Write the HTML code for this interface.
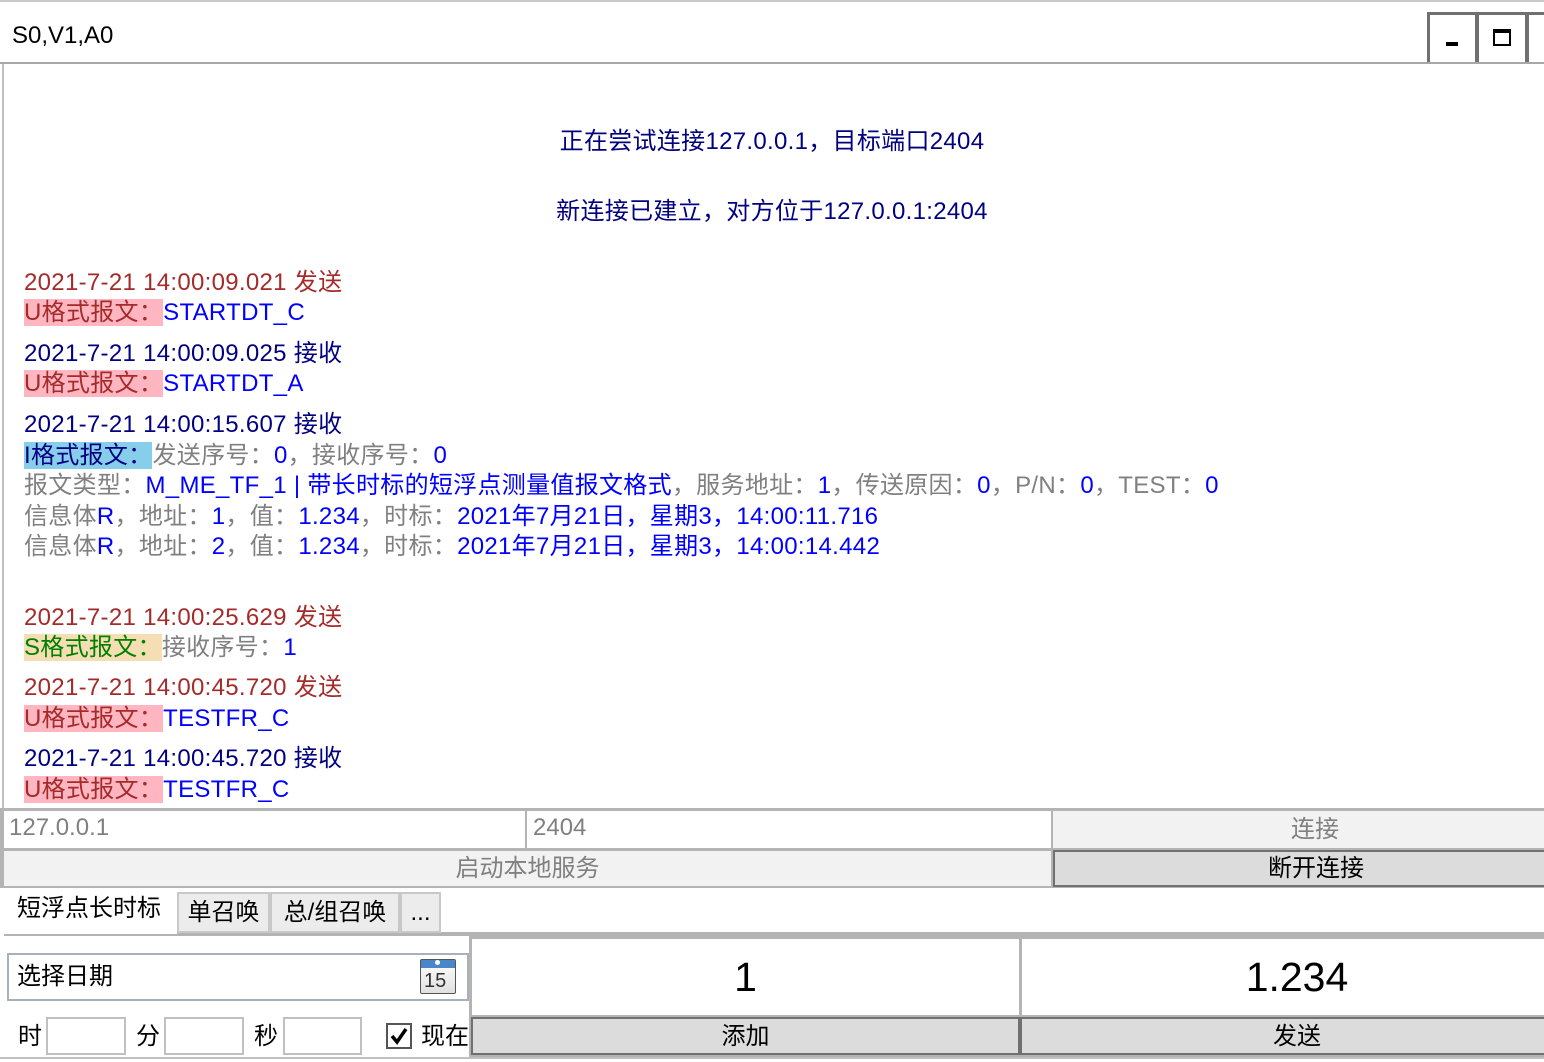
<!DOCTYPE html>
<html><head><meta charset="utf-8"><style>
*{margin:0;padding:0;box-sizing:border-box}
body{width:1544px;height:1062px;background:#fff;position:relative;overflow:hidden;font-family:"Liberation Sans","Noto Sans CJK SC",sans-serif;font-size:24px}
.a{position:absolute}
.l{position:absolute;left:24px;height:30px;line-height:30px;white-space:nowrap;letter-spacing:0.3px}
.r{color:#a52a2a}.n{color:#000080}.b{color:#0000ff}.g{color:#808080}.gr{color:#008000}
.pk{background:#ffb6c1}.sk{background:#87ceeb}.wh{background:#f5deb3}
.c{text-align:center}
</style></head><body>
<!-- title -->
<div class="a" style="left:0;top:0;width:1544px;height:2px;background:#c8c8c8"></div>
<div class="a" style="left:12px;top:22px;font-size:24px;color:#000">S0,V1,A0</div>
<div class="a" style="left:0;top:62px;width:1544px;height:2px;background:#a8a8a8"></div>
<div class="a" style="left:1427px;top:12px;width:51px;height:50px;border:3px solid #707070;border-bottom:none;background:#fff"></div>
<div class="a" style="left:1476px;top:12px;width:52px;height:50px;border:3px solid #707070;border-bottom:none;background:#fff"></div>
<div class="a" style="left:1526px;top:12px;width:20px;height:50px;border-left:3px solid #707070;border-top:3px solid #707070"></div>
<div class="a" style="left:1446px;top:42px;width:12px;height:4px;background:#000"></div>
<div class="a" style="left:1493px;top:29px;width:18px;height:17px;border:2px solid #000;border-top-width:4px"></div>
<div class="a" style="left:2px;top:64px;width:2px;height:746px;background:#c0c0c0"></div>
<!-- log -->
<div class="l n c" style="left:0;width:1544px;top:127px">正在尝试连接127.0.0.1，目标端口2404</div>
<div class="l n c" style="left:0;width:1544px;top:197px">新连接已建立，对方位于127.0.0.1:2404</div>
<div class="l r" style="top:268px">2021-7-21 14:00:09.021 发送</div>
<div class="l" style="top:298px"><span class="pk r">U格式报文：</span><span class="b">STARTDT_C</span></div>
<div class="l n" style="top:339px">2021-7-21 14:00:09.025 接收</div>
<div class="l" style="top:369px"><span class="pk r">U格式报文：</span><span class="b">STARTDT_A</span></div>
<div class="l n" style="top:410px">2021-7-21 14:00:15.607 接收</div>
<div class="l" style="top:441px"><span class="sk n">I格式报文：</span><span class="g">发送序号：</span><span class="b">0</span><span class="g">，接收序号：</span><span class="b">0</span></div>
<div class="l" style="top:471px"><span class="g">报文类型：</span><span class="b">M_ME_TF_1 | 带长时标的短浮点测量值报文格式</span><span class="g">，服务地址：</span><span class="b">1</span><span class="g">，传送原因：</span><span class="b">0</span><span class="g">，P/N：</span><span class="b">0</span><span class="g">，TEST：</span><span class="b">0</span></div>
<div class="l" style="top:502px"><span class="g">信息体</span><span class="b">R</span><span class="g">，地址：</span><span class="b">1</span><span class="g">，值：</span><span class="b">1.234</span><span class="g">，时标：</span><span class="b">2021年7月21日，星期3，14:00:11.716</span></div>
<div class="l" style="top:532px"><span class="g">信息体</span><span class="b">R</span><span class="g">，地址：</span><span class="b">2</span><span class="g">，值：</span><span class="b">1.234</span><span class="g">，时标：</span><span class="b">2021年7月21日，星期3，14:00:14.442</span></div>
<div class="l r" style="top:603px">2021-7-21 14:00:25.629 发送</div>
<div class="l" style="top:633px"><span class="wh gr">S格式报文：</span><span class="g">接收序号：</span><span class="b">1</span></div>
<div class="l r" style="top:673px">2021-7-21 14:00:45.720 发送</div>
<div class="l" style="top:704px"><span class="pk r">U格式报文：</span><span class="b">TESTFR_C</span></div>
<div class="l n" style="top:744px">2021-7-21 14:00:45.720 接收</div>
<div class="l" style="top:775px"><span class="pk r">U格式报文：</span><span class="b">TESTFR_C</span></div>
<!-- row1 -->
<div class="a" style="left:0;top:808px;width:1544px;height:80px;background:#b4b4b4"></div>
<div class="a g" style="left:4px;top:811px;width:521px;height:37px;background:#fff;padding-left:5px;line-height:34px">127.0.0.1</div>
<div class="a g" style="left:527px;top:811px;width:524px;height:37px;background:#fff;padding-left:6px;line-height:34px">2404</div>
<div class="a g c" style="left:1053px;top:811px;width:524px;height:37px;background:#f2f2f2;line-height:38px">连接</div>
<div class="a g c" style="left:4px;top:851px;width:1047px;height:35px;background:#f2f2f2;line-height:36px">启动本地服务</div>
<div class="a c" style="left:1053px;top:850px;width:524px;height:37px;background:#dcdcdc;border-top:2px solid #707070;border-left:2px solid #707070;border-bottom:2px solid #707070;line-height:34px">断开连接</div>
<!-- tabs -->
<div class="a" style="left:0;top:888px;width:1544px;height:174px;background:#fff"></div>
<div class="a" style="left:176px;top:932px;width:1368px;height:2px;background:#b4b4b4"></div>
<div class="a" style="left:4px;top:934px;width:1540px;height:2px;background:#b4b4b4"></div>
<div class="a" style="left:4px;top:888px;width:173px;height:46px;background:#fff;line-height:42px;padding-left:13px">短浮点长时标</div>
<div class="a c" style="left:177px;top:892px;width:93px;height:41px;background:#ececec;border:2px solid #c8c8c8;line-height:38px">单召唤</div>
<div class="a c" style="left:270px;top:892px;width:130px;height:41px;background:#ececec;border:2px solid #c8c8c8;line-height:38px">总/组召唤</div>
<div class="a c" style="left:400px;top:892px;width:41px;height:41px;background:#ececec;border:2px solid #c8c8c8;line-height:38px">...</div>
<!-- date picker -->
<div class="a" style="left:7px;top:953px;width:462px;height:48px;border:2px solid #a7b0bb;line-height:44px;padding-left:8px">选择日期</div>
<div class="a" style="left:420px;top:959px;width:36px;height:35px;border:1px solid #555;border-radius:2px;background:linear-gradient(#fff,#e0e0e0)"></div>
<div class="a" style="left:421px;top:960px;width:34px;height:8px;background:#4a86c8"></div>
<div class="a" style="left:435px;top:960px;width:5px;height:5px;border-radius:50%;background:#fff"></div>
<div class="a" style="left:424px;top:968px;font-size:20px;line-height:26px;color:#333">15</div>
<!-- time inputs -->
<div class="a" style="left:18px;top:1020px;line-height:34px">时</div>
<div class="a" style="left:46px;top:1017px;width:80px;height:38px;border:2px solid #c0c0c0"></div>
<div class="a" style="left:136px;top:1020px;line-height:34px">分</div>
<div class="a" style="left:164px;top:1017px;width:80px;height:38px;border:2px solid #c0c0c0"></div>
<div class="a" style="left:254px;top:1020px;line-height:34px">秒</div>
<div class="a" style="left:283px;top:1017px;width:79px;height:38px;border:2px solid #c0c0c0"></div>
<div class="a" style="left:386px;top:1023px;width:26px;height:26px;border:2px solid #555;background:#fff"></div>
<svg class="a" style="left:388px;top:1025px" width="22" height="22" viewBox="0 0 22 22"><path d="M4 11 L9 17 L18 4" fill="none" stroke="#000" stroke-width="3.5"/></svg>
<div class="a" style="left:421px;top:1020px;line-height:34px">现在</div>
<!-- value boxes -->
<div class="a" style="left:469px;top:936px;width:1075px;height:126px;background:#b4b4b4"></div>
<div class="a c" style="left:472px;top:939px;width:547px;height:76px;background:#fff;font-size:41px;line-height:76px">1</div>
<div class="a c" style="left:1022px;top:939px;width:550px;height:76px;background:#fff;font-size:41px;line-height:76px">1.234</div>
<div class="a c" style="left:471px;top:1017px;width:549px;height:38px;background:#dcdcdc;border:2px solid #707070;line-height:36px">添加</div>
<div class="a c" style="left:1020px;top:1017px;width:552px;height:38px;background:#dcdcdc;border:2px solid #707070;border-right:none;line-height:36px">发送</div>
<div class="a" style="left:0;top:1057px;width:1544px;height:5px;background:#fff;border-top:2px solid #c0c0c0"></div>
</body></html>
